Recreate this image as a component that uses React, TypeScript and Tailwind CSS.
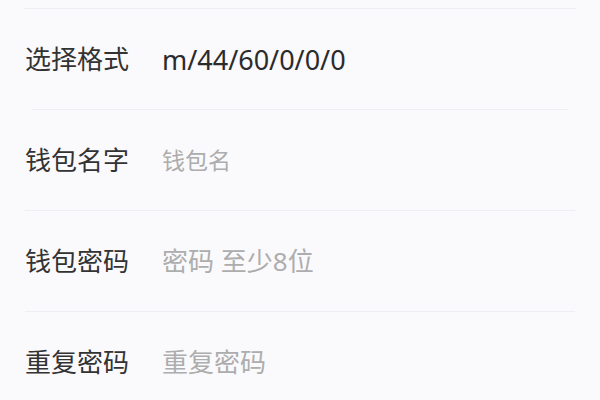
const rows = [
  { label: "选择格式", value: "m/44/60/0/0/0", kind: "value" },
  { label: "钱包名字", value: "钱包名", kind: "small" },
  { label: "钱包密码", value: "密码 至少8位", kind: "hint" },
  { label: "重复密码", value: "重复密码", kind: "hint" },
]

const dividerInsets = ["mx-[24px]", "mx-[32px]", "mx-[25px]", "mx-[25px]"]

const valueClass: Record<string, string> = {
  value: "text-[27px] text-[#2b2b2b]",
  small: "text-[23px] text-[#adadad]",
  hint: "text-[26px] text-[#adadad]",
}

export default function App() {
  return (
    <div
      className="w-[600px] h-[400px] overflow-hidden bg-[#faf9fc]"
      style={{ fontFamily: '"Noto Sans", "Noto Sans CJK SC", sans-serif' }}
    >
      <div className="h-[8px]" />
      {rows.map((row, i) => (
        <div key={row.label}>
          <div className={`h-[1px] bg-[#efeef2] ${dividerInsets[i]}`} />
          <div className="h-[100px] flex items-center pl-[25px]">
            <span className="w-[137px] shrink-0 text-[26px] leading-none text-[#333333]">
              {row.label}
            </span>
            <span className={`leading-none ${valueClass[row.kind]}`}>{row.value}</span>
          </div>
        </div>
      ))}
    </div>
  )
}
